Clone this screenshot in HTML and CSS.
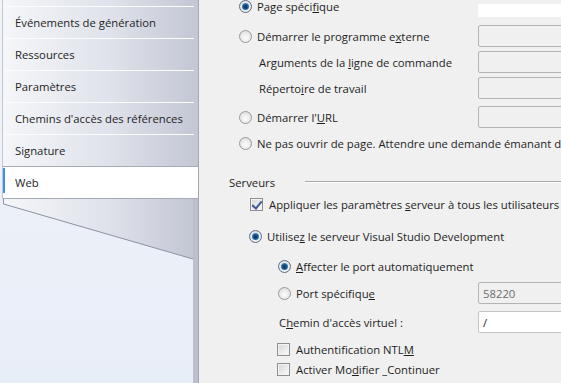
FILE: index.html
```html
<!DOCTYPE html>
<html lang="fr">
<head>
    <meta charset="UTF-8">
    <title>Propriétés du projet - Web</title>
    <link rel="stylesheet" href="styles.css">
</head>
<body>

    <div class="window">
        <!-- ONGLETS -->
        <nav class="sidebar">
            <ul class="tabs">
                <li>Événements de génération</li>
                <li>Ressources</li>
                <li>Paramètres</li>
                <li>Chemins d'accès des références</li>
                <li>Signature</li>
                <li class="active">Web</li>
            </ul>
            <svg class="tail" width="198" height="185" viewBox="0 0 198 185">
                <defs>
                    <linearGradient id="tabGrad" x1="0" y1="0" x2="1" y2="0">
                        <stop offset="0" stop-color="#f4f6f9"/>
                        <stop offset="0.55" stop-color="#dfe2ea"/>
                        <stop offset="1" stop-color="#c3c7d4"/>
                    </linearGradient>
                </defs>
                <polygon points="3,0 193,0 193,61 3,6" fill="url(#tabGrad)"/>
                <polyline points="3.5,0 3.5,6 193,61" fill="none" stroke="#8c92a3" stroke-width="1"/>
                <rect x="193" y="0" width="5" height="185" fill="#bcc0ce"/>
            </svg>
        </nav>

        <!-- PAGE WEB -->
        <main class="page">
            <div class="row first">
                <span class="radio checked"></span>
                <span class="label">Page spéci<u>f</u>ique</span>
                <span class="box white cut"></span>
            </div>
            <div class="row start">
                <span class="radio"></span>
                <span class="label">Démarrer le programme e<u>x</u>terne</span>
                <span class="box"></span>
            </div>
            <div class="row sub">
                <span class="label">Arguments de la <u>l</u>igne de commande</span>
                <span class="box"></span>
            </div>
            <div class="row sub">
                <span class="label">Réperto<u>i</u>re de travail</span>
                <span class="box"></span>
            </div>
            <div class="row url">
                <span class="radio"></span>
                <span class="label">Démarrer l'<u>U</u>RL</span>
                <span class="box"></span>
            </div>
            <div class="row last">
                <span class="radio"></span>
                <span class="label">Ne pas ouvrir de pa<u>g</u>e. Attendre une demande émanant d'une application externe.</span>
            </div>

            <div class="group-title">
                <span>Serveurs</span>
                <span class="rule"></span>
            </div>

            <div class="row server">
                <span class="check checked"></span>
                <span class="label">Appliquer les paramètres <u>s</u>erveur à tous les utilisateurs (stocker dans le fichier projet)</span>
            </div>
            <div class="row server vs">
                <span class="radio checked"></span>
                <span class="label">Utilise<u>z</u> le serveur Visual Studio Development</span>
            </div>
            <div class="row port">
                <span class="radio checked"></span>
                <span class="label"><u>A</u>ffecter le port automatiquement</span>
            </div>
            <div class="row port specific">
                <span class="radio"></span>
                <span class="label">Port spécifiqu<u>e</u></span>
                <span class="box">58220</span>
            </div>
            <div class="row port vpath">
                <span class="label">C<u>h</u>emin d'accès virtuel :</span>
                <span class="box white">/</span>
            </div>
            <div class="row opt ntlm">
                <span class="check"></span>
                <span class="label">Authentification NTL<u>M</u></span>
            </div>
            <div class="row opt">
                <span class="check"></span>
                <span class="label">Activer Mo<u>d</u>ifier _Continuer</span>
            </div>
        </main>
    </div>

</body>
</html>
```

FILE: styles.css
```css
:root {
    --page: #f0f0f0;
    --text: #1e1e1e;
    --field-border: #b4b4b4;
    --font-ui: "Open Sans", "Noto Sans", sans-serif;
}

* { margin: 0; padding: 0; box-sizing: border-box; }

html, body {
    height: 100%;
    overflow: hidden;
}

body {
    background: var(--page);
    color: var(--text);
    font-family: var(--font-ui);
    font-size: 11.3px;
}

.window {
    display: flex;
    width: 578px;
    height: 383px;
}

/* ---------- onglets ---------- */

.sidebar {
    flex: none;
    width: 199px;
    display: flex;
    flex-direction: column;
    background: linear-gradient(#f1f4f9, #e8eef8);
    border-right: 1px solid #a3a8b6;
}

.tabs {
    list-style: none;
    margin-left: 2px;
    padding-top: 6px;
    border-left: 1px solid #c2c6d0;
    background: linear-gradient(to right, #f4f6f9 0%, #dfe2ea 55%, #c3c7d4 100%);
}

.tabs li {
    height: 32px;
    margin-right: 4px;
    padding-left: 12px;
    display: flex;
    align-items: center;
    border-top: 1px solid #fbfcfd;
    white-space: nowrap;
}

.tabs li.active {
    position: relative;
    margin-right: 0;
    background: #fff;
    border-top: 1px solid #a6aab6;
    border-bottom: 1px solid #a6aab6;
    height: 33px;
}

.tabs li.active::before {
    content: "";
    position: absolute;
    left: 0;
    top: 1px;
    width: 2px;
    height: 25px;
    background: #3a8fe6;
}

.tail {
    display: block;
    margin-top: -1px;
}

/* ---------- page ---------- */

.page {
    flex: none;
    width: 379px;
    margin-top: -5px;
    white-space: nowrap;
}

.row {
    display: flex;
    align-items: center;
    height: 22px;
    margin-top: 6px;
    padding-left: 40px;
}

.row.first { margin-top: 0; }
.row.start { margin-top: 8px; }
.row.sub { padding-left: 60px; margin-top: 4px; }
.row.url { margin-top: 7px; }
.row.last { margin-top: 4px; }

.label {
    flex: none;
}

.radio + .label { margin-left: 5px; }
.check + .label { margin-left: 6px; }

.box {
    flex: none;
    width: 100px;
    height: 22px;
    margin-left: auto;
    display: flex;
    align-items: center;
    padding-left: 4px;
    border: 1px solid var(--field-border);
    border-radius: 2px;
    background: #f0f0f0;
    color: #6d6d6d;
}

.box.white {
    background: #fff;
    border-color: #c4c4c4;
    color: var(--text);
}

.box.cut {
    align-self: flex-end;
    height: 13px;
    border: none;
    border-radius: 0;
}

/* radio Win7 */
.radio {
    flex: none;
    width: 13px;
    height: 13px;
    border-radius: 50%;
    border: 1px solid #9a9a9a;
    background: radial-gradient(circle at 50% 60%, #fdfdfd 0%, #e9e9e9 55%, #d2d2d2 100%);
    position: relative;
}

.radio.checked {
    border-color: #5c6f86;
}

.radio.checked::after {
    content: "";
    position: absolute;
    left: 2px;
    top: 2px;
    width: 7px;
    height: 7px;
    border-radius: 50%;
    background: radial-gradient(circle at 50% 55%, #0d2a4a 0%, #1c5a93 45%, #57a8e0 85%, #9cd0f0 100%);
}

/* checkbox Win7 */
.check {
    flex: none;
    width: 13px;
    height: 13px;
    border: 1px solid #8e8f8f;
    background: linear-gradient(135deg, #d6d6d6, #fbfbfb);
    box-shadow: inset 0 0 0 1px #f4f4f4;
    position: relative;
}

.check.checked::after {
    content: "";
    position: absolute;
    left: 3px;
    top: 0;
    width: 4px;
    height: 8px;
    border-right: 2px solid #3f5a9a;
    border-bottom: 2px solid #3f5a9a;
    transform: rotate(40deg);
}

/* groupe Serveurs */
.group-title {
    display: flex;
    align-items: center;
    height: 22px;
    margin-top: 17px;
    padding-left: 30px;
}

.group-title span:first-child {
    flex: none;
    width: 76px;
}

.group-title .rule {
    flex: 1;
    height: 2px;
    border-top: 1px solid #a8a8a8;
    border-bottom: 1px solid #fff;
}

.row.server { padding-left: 51px; margin-top: 0; }
.row.server.vs { padding-left: 50px; margin-top: 10px; }
.row.port { padding-left: 79px; margin-top: 8px; }
.row.port.specific { margin-top: 5px; }
.row.port.vpath { padding-left: 80px; margin-top: 7px; }
.row.opt { padding-left: 78px; height: 19px; margin-top: 1px; }
.row.opt.ntlm { margin-top: 7px; }
```
